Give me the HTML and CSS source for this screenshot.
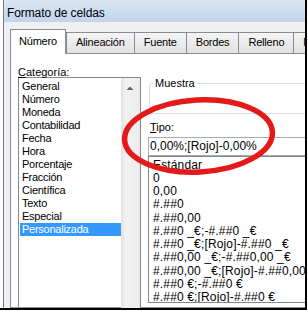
FILE: index.html
```html
<!DOCTYPE html>
<html lang="es">
<head>
<meta charset="utf-8">
<title>Formato de celdas</title>
<link rel="stylesheet" href="styles.css">
</head>
<body>
<div class="shot">
  <div class="window">
    <div class="titlebar">Formato de celdas</div>
    <div class="dlg">
      <div class="tabs">
        <div class="tab sel">Número</div>
        <div class="tab">Alineación</div>
        <div class="tab">Fuente</div>
        <div class="tab">Bordes</div>
        <div class="tab">Relleno</div>
        <div class="tab">Protección</div>
      </div>
      <div class="panel">
        <div class="left">
          <div class="lbl"><u>C</u>ategoría:</div>
          <div class="catlist">
            <ul class="items">
              <li>General</li>
              <li>Número</li>
              <li>Moneda</li>
              <li>Contabilidad</li>
              <li>Fecha</li>
              <li>Hora</li>
              <li>Porcentaje</li>
              <li>Fracción</li>
              <li>Científica</li>
              <li>Texto</li>
              <li>Especial</li>
              <li class="sel">Personalizada</li>
            </ul>
            <div class="vscroll">
              <svg class="arrow" width="18" height="17" viewBox="0 0 18 17"><polygon points="5.5,12 9,8.5 12.5,12" fill="#606060"/></svg>
            </div>
          </div>
        </div>
        <div class="right">
          <fieldset class="sample">
            <legend>Muestra</legend>
            <div class="sample-body"></div>
          </fieldset>
          <div class="lbl tipo"><u>T</u>ipo:</div>
          <div class="input">0,00%;[Rojo]-0,00%</div>
          <ul class="typelist">
            <li>Estándar</li>
            <li>0</li>
            <li>0,00</li>
            <li>#.##0</li>
            <li>#.##0,00</li>
            <li>#.##0 _€;-#.##0 _€</li>
            <li>#.##0 _€;[Rojo]-#.##0 _€</li>
            <li>#.##0,00 _€;-#.##0,00 _€</li>
            <li>#.##0,00 _€;[Rojo]-#.##0,00 _€</li>
            <li>#.##0 €;-#.##0 €</li>
            <li>#.##0 €;[Rojo]-#.##0 €</li>
          </ul>
        </div>
      </div>
    </div>
  </div>
  <svg class="mark" width="308" height="311" viewBox="0 0 308 311">
    <ellipse cx="198.5" cy="136" rx="74" ry="36" transform="rotate(-3 198.5 136)" fill="none" stroke="#e41a1a" stroke-width="5.5"/>
  </svg>
</div>
</body>
</html>
```

FILE: styles.css
```css
* { box-sizing: border-box; }

body {
  margin: 0;
  background: #fff;
  font-family: "Liberation Sans", Arial, sans-serif;
  color: #000;
}

.shot {
  position: relative;
  width: 307px;
  height: 310px;
  border-right: 2px solid #000;
  border-bottom: 2px solid #000;
  overflow: hidden;
}

.window {
  margin-left: 3px;
  height: 100%;
  border-left: 1px solid #6f7e90;
  display: flex;
  flex-direction: column;
  background: #f0f0f0;
}

.titlebar {
  flex: none;
  height: 22px;
  padding: 5px 0 0 3px;
  font-size: 12px;
  line-height: 16px;
  letter-spacing: -0.1px;
  background: linear-gradient(#dae6f4, #c1d4ec);
}

.dlg {
  flex: 1;
  min-height: 0;
  display: flex;
  flex-direction: column;
  padding-top: 7px;
}

.tabs {
  flex: none;
  display: flex;
  align-items: flex-end;
  padding-left: 6px;
  position: relative;
  z-index: 1;
}

.tab {
  flex: none;
  height: 21px;
  padding: 3px 9px 0;
  font-size: 11px;
  line-height: 13px;
  letter-spacing: -0.2px;
  white-space: nowrap;
  border: 1px solid #898c95;
  border-bottom: none;
  background: linear-gradient(#f5f5f5, #e1e1e1);
}

.tab + .tab + .tab { margin-left: -1px; }

.tab.sel {
  height: 25px;
  margin-bottom: -1px;
  padding: 5px 8px 0;
  background: #fff;
}

.panel {
  flex: 1;
  min-height: 0;
  margin: 0 -20px 0 6px;
  border: 1px solid #898c95;
  background: #fff;
  display: flex;
  gap: 7px;
  padding: 11px 0 0 7px;
}

.left {
  flex: none;
  width: 123px;
}

.lbl {
  font-size: 11px;
  line-height: 12px;
  margin-top: 1px;
}

.catlist {
  margin-top: -1px;
  height: 300px;
  border: 1px solid #828790;
  display: flex;
}

.items {
  list-style: none;
  margin: 0;
  padding: 2px 0 0;
  width: 102px;
  flex: none;
}

.items li {
  margin-left: 1px;
  padding-left: 2px;
  height: 13px;
  font-size: 11px;
  line-height: 13px;
  letter-spacing: -0.25px;
  white-space: nowrap;
}

.items li.sel {
  background: #3399ff;
  color: #fff;
}

.vscroll {
  flex: 1;
  background: linear-gradient(to right, #e2e2e2, #f2f2f2 25%, #ececec);
}

.arrow { display: block; }

.right {
  flex: 1;
  min-width: 0;
}

.sample {
  margin: 12px 0 0 1px;
  padding: 0;
  min-width: 0;
  border: 1px solid #d5dfe5;
  border-radius: 3px;
}

.sample legend {
  margin-left: 3px;
  padding: 0 2px;
  font-size: 11px;
  line-height: 13px;
}

.sample-body { height: 23px; }

.lbl.tipo {
  margin: 7px 0 3px 2px;
  line-height: 13px;
}

.input {
  height: 19px;
  border: 1px solid #a5acb5;
  padding-left: 1px;
  font-size: 12px;
  line-height: 17px;
  white-space: nowrap;
}

.typelist {
  list-style: none;
  margin: 0;
  height: 147px;
  padding: 1.5px 0 0 4px;
  border: 1px solid #828790;
  font-size: 12px;
  overflow: hidden;
}

.typelist li {
  line-height: 13.25px;
  height: 13.25px;
  letter-spacing: 0.15px;
  white-space: nowrap;
}

.mark {
  position: absolute;
  left: 0;
  top: 0;
  pointer-events: none;
}
```
